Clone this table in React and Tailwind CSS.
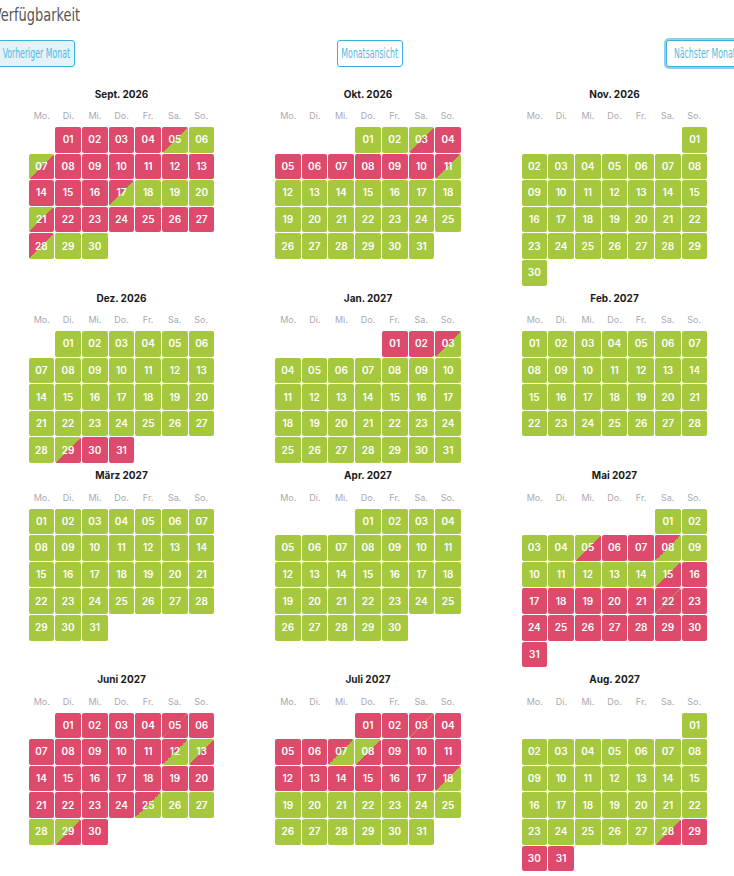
import React from "react";

const R = "r", G = "g";
const rep = (c, n) => c.repeat(n);

// r = belegt, g = frei, d = abreise (oben rot / unten grün), a = anreise, x = wechsel
const months = [
  { title: "Sept. 2026", offset: 1, days: "rrrrdga" + rep(R, 9) + "dggga" + rep(R, 6) + "dgg" },
  { title: "Okt. 2026", offset: 3, days: "gga" + rep(R, 7) + "d" + rep(G, 20) },
  { title: "Nov. 2026", offset: 6, days: rep(G, 30) },
  { title: "Dez. 2026", offset: 1, days: rep(G, 28) + "arr" },
  { title: "Jan. 2027", offset: 4, days: "rrd" + rep(G, 28) },
  { title: "Feb. 2027", offset: 0, days: rep(G, 28) },
  { title: "März 2027", offset: 0, days: rep(G, 31) },
  { title: "Apr. 2027", offset: 3, days: rep(G, 30) },
  { title: "Mai 2027", offset: 5, days: "gggga" + "rrd" + rep(G, 6) + "a" + rep(R, 6) + "x" + rep(R, 9) },
  { title: "Juni 2027", offset: 1, days: "rrrrx" + rep(R, 6) + "da" + rep(R, 11) + "dggga" + "r" },
  { title: "Juli 2027", offset: 3, days: "rrxrrrda" + rep(R, 9) + "d" + rep(G, 13) },
  { title: "Aug. 2027", offset: 6, days: rep(G, 27) + "arrr" },
];

const weekdays = ["Mo.", "Di.", "Mi.", "Do.", "Fr.", "Sa.", "So."];

const cellBg = {
  r: "bg-[#de4a6c]",
  g: "bg-[#a5c83f]",
  d: "bg-linear-to-br from-[#de4a6c] from-50% to-[#a5c83f] to-50%",
  a: "bg-linear-to-br from-[#a5c83f] from-50% to-[#de4a6c] to-50%",
  x: "bg-[linear-gradient(to_bottom_right,#de4a6c_49%,#d98a5e_50%,#de4a6c_51%)]",
};

function Month({ title, offset, days }) {
  const list = days.split("");
  return (
    <div className="w-[186px] mx-auto pb-[4.5px]">
      <div className="h-4 flex items-center justify-center text-[10px] font-bold text-[#1a1a1a]">
        {title}
      </div>
      <div className="mt-[7px] h-[14px] grid grid-cols-7 text-[9px] text-[#a9a9b0]">
        {weekdays.map((w) => (
          <div key={w} className="flex items-center justify-center">{w}</div>
        ))}
      </div>
      <div className="mt-1 grid grid-cols-7 gap-px">
        {Array.from({ length: offset }).map((_, i) => (
          <div key={"e" + i} />
        ))}
        {list.map((s, i) => (
          <div
            key={i}
            className={`h-[25.6px] rounded-[2px] flex items-center justify-center text-[10px] font-semibold text-white ${cellBg[s]}`}
          >
            {String(i + 1).padStart(2, "0")}
          </div>
        ))}
      </div>
    </div>
  );
}

function NavButton({ label, w, active, focus }) {
  return (
    <button
      className={`h-[27px] ${w} rounded-[3px] border border-[#3ab3dc] flex items-center justify-center ${
        active ? "bg-[#e4f3fa]" : "bg-white"
      } ${focus ? "ring-2 ring-[#8fd0ea]" : ""}`}
    >
      <span className="inline-block whitespace-nowrap scale-x-[0.62]">{label}</span>
    </button>
  );
}

export default function App() {
  return (
    <div className="bg-white min-h-[876px] overflow-hidden font-['Inter',sans-serif]">
      <div className="-ml-[3px] w-[746px]">
        <h2 className="h-[28px] flex items-center text-[18px] text-[#555] font-['DejaVu_Sans_Condensed','DejaVu_Sans',sans-serif] -ml-[4px]">
          <span className="inline-block whitespace-nowrap origin-left scale-x-[0.8]">Verfügbarkeit</span>
        </h2>
        <div className="mt-3 grid grid-cols-3 items-center font-['DejaVu_Sans_Condensed','DejaVu_Sans',sans-serif] text-[14px] text-[#52bbe0]">
          <div className="justify-self-start">
            <NavButton label="Vorheriger Monat" w="w-[78px]" active />
          </div>
          <div className="justify-self-center">
            <NavButton label="Monatsansicht" w="w-[66px]" />
          </div>
          <div className="justify-self-end">
            <NavButton label="Nächster Monat" w="w-[77px]" focus />
          </div>
        </div>
        <div className="mt-[19px] ml-[1.25px] grid grid-cols-[repeat(3,246.5px)] items-start">
          {months.map((m) => (
            <Month key={m.title} {...m} />
          ))}
        </div>
      </div>
    </div>
  );
}
